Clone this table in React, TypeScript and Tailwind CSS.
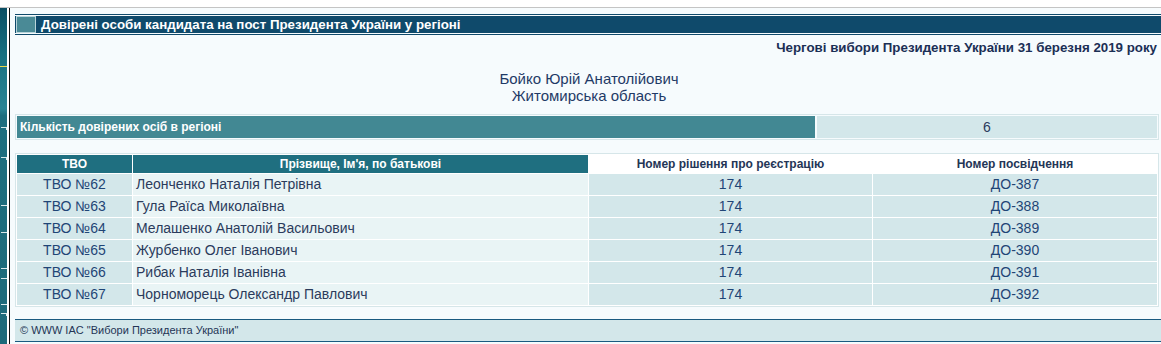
import React from 'react'

const rows = [
  { tvo: 'ТВО №62', name: 'Леонченко Наталія Петрівна', decision: '174', cert: 'ДО-387' },
  { tvo: 'ТВО №63', name: 'Гула Раїса Миколаївна', decision: '174', cert: 'ДО-388' },
  { tvo: 'ТВО №64', name: 'Мелашенко Анатолій Васильович', decision: '174', cert: 'ДО-389' },
  { tvo: 'ТВО №65', name: 'Журбенко Олег Іванович', decision: '174', cert: 'ДО-390' },
  { tvo: 'ТВО №66', name: 'Рибак Наталія Іванівна', decision: '174', cert: 'ДО-391' },
  { tvo: 'ТВО №67', name: 'Чорноморець Олександр Павлович', decision: '174', cert: 'ДО-392' },
]

// decorative strip on the left edge of the old page frame
function SideStrip() {
  return (
    <svg width="9" height="336" viewBox="0 0 9 336" className="block">
      <defs>
        <linearGradient id="strip" x1="0" y1="0" x2="0" y2="1">
          <stop offset="0" stopColor="#0a4e63" />
          <stop offset="0.14" stopColor="#167080" />
          <stop offset="0.3" stopColor="#2a8494" />
          <stop offset="0.32" stopColor="#1e6e7e" />
          <stop offset="1" stopColor="#1d6a7a" />
        </linearGradient>
      </defs>
      <rect x="0" y="0" width="7" height="336" fill="url(#strip)" />
      <rect x="0" y="58" width="7" height="1" fill="#e8d84a" />
      {[119, 149, 197, 224, 260, 270, 296, 305].map((y) => (
        <rect key={y} x="1" y={y} width="6" height="1" fill="#d8e8ea" />
      ))}
      {[119, 149, 305].map((y) => (
        <rect key={'v' + y} x="6" y={y} width="1" height="3" fill="#d8e8ea" />
      ))}
    </svg>
  )
}

export default function App() {
  return (
    <div className="w-[1161px] h-[344px] overflow-hidden bg-white font-['Liberation_Sans',Arial,sans-serif]">
      <div className="h-[7px] bg-white" />
      <div className="h-px bg-[#c4c4c4]" />
      <div className="flex h-[336px]">
        <SideStrip />
        <div className="w-px bg-[#111]" />
        <div className="flex-1 bg-[#f6fbfd] pl-[5px] pt-[6px]">
          {/* title bar */}
          <div className="border-y border-[#0f4a6b] py-px">
            <div className="flex items-center h-[17px] bg-[#0f4a6b]">
              <div className="w-[20px] h-[17px] bg-[#4a8a96] border border-[#b8d4da] ml-px" />
              <span className="ml-[5px] text-[13.3px] font-bold text-white leading-none">
                Довірені особи кандидата на пост Президента України у регіоні
              </span>
            </div>
          </div>

          <div className="pr-[4px] pt-[5px] text-right text-[13.3px] font-bold text-[#1b2f55] leading-[16px]">
            Чергові вибори Президента України 31 березня 2019 року
          </div>

          <div className="mt-[14px] pl-[2px] text-center text-[15px] text-[#1f3a66] leading-[17px]">
            <div>Бойко Юрій Анатолійович</div>
            <div>Житомирська область</div>
          </div>

          {/* count */}
          <div className="mt-[10px] mr-[2px] border border-[#d6e6e9] p-px">
            <div className="flex gap-[2px] h-[22px]">
              <div className="w-[798px] bg-[#428893] flex items-center pl-[3px] text-[12px] font-bold text-white">
                Кількість довірених осіб в регіоні
              </div>
              <div className="flex-1 bg-[#d3e7ea] flex items-center justify-center text-[14px] text-[#2b3b5c]">
                6
              </div>
            </div>
          </div>

          {/* list */}
          <div className="mt-[13px] mr-[2px] border border-[#d6e6e9] p-px bg-white">
            <table className="w-full border-separate border-spacing-0">
              <thead>
                <tr className="h-[18px] text-[12px] font-bold">
                  <th className="w-[115px] bg-[#1f6f80] text-white font-bold p-0">ТВО</th>
                  <th className="w-[456px] bg-[#1f6f80] text-white font-bold p-0 border-l border-white">
                    Прізвище, Ім'я, по батькові
                  </th>
                  <th className="w-[284px] bg-white text-[#243556] font-bold p-0 border-l border-white">
                    Номер рішення про реєстрацію
                  </th>
                  <th className="bg-white text-[#243556] font-bold p-0 border-l border-white">
                    Номер посвідчення
                  </th>
                </tr>
              </thead>
              <tbody>
                {rows.map((r) => (
                  <tr key={r.tvo} className="h-[22px] text-[14px]">
                    <td className="bg-[#d3e7ea] text-center text-[#1f4576] p-0 border-t border-white">{r.tvo}</td>
                    <td className="bg-[#e9f4f5] text-[#2b3b5c] pl-[3px] p-0 border-t border-l border-white">{r.name}</td>
                    <td className="bg-[#d3e7ea] text-center text-[#1f4576] p-0 border-t border-l border-white">{r.decision}</td>
                    <td className="bg-[#d3e7ea] text-center text-[#1f4576] p-0 border-t border-l border-white">{r.cert}</td>
                  </tr>
                ))}
              </tbody>
            </table>
          </div>

          {/* footer */}
          <div className="mt-[12px] h-[23px] border-y border-[#1a5a80] bg-[#d3e7ea] flex items-center pl-[5px] text-[11px] text-[#243556]">
            © WWW IAC "Вибори Президента України"
          </div>
        </div>
      </div>
    </div>
  )
}
